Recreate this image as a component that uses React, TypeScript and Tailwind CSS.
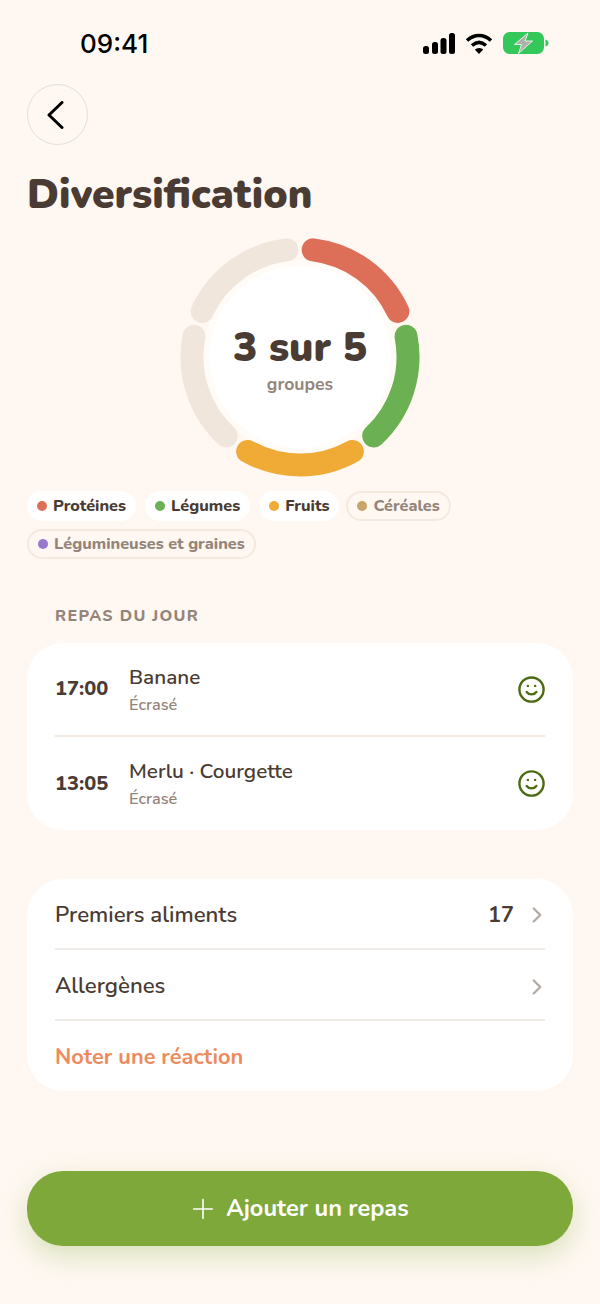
import React from 'react';
import { ChevronRight, Plus, Smile } from 'lucide-react';

const RING = [
  { color: '#DD6F59', start: 7, end: 65 },
  { color: '#6BB052', start: 79, end: 137 },
  { color: '#F0AA36', start: 151, end: 209 },
  { color: '#F1E6DC', start: 223, end: 281 },
  { color: '#F1E6DC', start: 295, end: 353 },
];

function arcPath(start: number, end: number) {
  const cx = 120;
  const cy = 120;
  const r = 108;
  const toPoint = (deg: number) => {
    const rad = (deg * Math.PI) / 180;
    return `${(cx + r * Math.sin(rad)).toFixed(2)} ${(cy - r * Math.cos(rad)).toFixed(2)}`;
  };
  return `M ${toPoint(start)} A ${r} ${r} 0 0 1 ${toPoint(end)}`;
}

function StatusBar() {
  return (
    <div className="h-[84px] flex items-start justify-between pt-[28px] pl-[80px] pr-[51px]">
      <span className="text-[26px] leading-[32px] font-medium text-black font-['Inter',sans-serif]">09:41</span>
      <div className="flex items-center gap-[10px] pt-[4px]">
        <svg width="32" height="21" viewBox="0 0 32 21" fill="#000">
          <rect x="0" y="13" width="6" height="8" rx="2.5" />
          <rect x="9" y="9" width="6" height="12" rx="2.5" />
          <rect x="17.5" y="5" width="6" height="16" rx="2.5" />
          <rect x="26" y="0" width="6" height="21" rx="2.5" />
        </svg>
        <svg width="28" height="21" viewBox="0 0 28 21" fill="none" stroke="#000" strokeWidth="3.6">
          <path d="M2 7.5C9.5 .8 18.5 .8 26 7.5" />
          <path d="M7 12.5C11.5 8.6 16.5 8.6 21 12.5" />
          <path d="M14 21l-4.2-4.4c2.6-2 5.8-2 8.4 0z" fill="#000" stroke="none" />
        </svg>
        <svg width="46" height="22" viewBox="0 0 46 22">
          <rect x="0" y="0" width="41" height="22" rx="6.5" fill="#34C759" />
          <path d="M42.5 7.5c2 .5 3 2 3 3.5s-1 3-3 3.5z" fill="#34C759" />
          <path d="M25 1L11.5 12.5h7L15.5 21.5 29.5 9H22z" fill="#AEB2AA" stroke="#fff" strokeWidth="0.8" />
        </svg>
      </div>
    </div>
  );
}

function Chip({ color, label, active, className }: { color: string; label: string; active?: boolean; className?: string }) {
  const base = active
    ? 'h-[30px] flex items-center gap-[6px] px-[10px] rounded-full bg-white text-[16.25px] font-extrabold text-[#4A3B33]'
    : 'h-[30px] flex items-center gap-[6px] px-[9px] rounded-full border-2 border-[#F4E9DF] text-[16.25px] font-extrabold text-[#94857B]';
  return (
    <div className={`${base} ${className ?? ''}`}>
      <span className="w-[10px] h-[10px] rounded-full" style={{ backgroundColor: color }} />
      <span>{label}</span>
    </div>
  );
}

function MealRow({ time, name, height }: { time: string; name: string; height: string }) {
  return (
    <div className={`${height} flex items-center`}>
      <span className="w-[74px] text-[20px] font-extrabold text-[#4A3B33]">{time}</span>
      <div className="flex-1">
        <div className="text-[20.7px] leading-[28px] font-semibold text-[#4A3B33]">{name}</div>
        <div className="text-[16.2px] leading-[22px] mt-[3px] font-semibold text-[#94857B]">Écrasé</div>
      </div>
      <Smile className="w-[29px] h-[29px] text-[#4D6B12] -mr-[1px]" strokeWidth={2} />
    </div>
  );
}

export default function App() {
  return (
    <div className="w-[600px] h-[1304px] overflow-hidden bg-[#FFF8F2] font-['Nunito','Lato',sans-serif]">
      <StatusBar />

      <div className="px-[27px]">
        <button className="w-[61px] h-[61px] rounded-full border border-[#E5DDD6] flex items-center justify-center">
          <svg width="17" height="28" viewBox="0 0 17 28" fill="none" stroke="#000" strokeWidth="3" strokeLinecap="round" strokeLinejoin="round" className="-ml-[4px]">
            <path d="M15 1.5L2 14l13 12.5" />
          </svg>
        </button>

        <h1 className="mt-[21px] text-[40.7px] leading-[58px] font-black text-[#4A3B33]">Diversification</h1>

        <div className="mt-[13px] mx-auto relative w-[240px] h-[240px]">
          <svg width="240" height="240" viewBox="0 0 240 240" fill="none">
            <circle cx="120" cy="120" r="97" fill="#FFFBF7" />
            <circle cx="120" cy="120" r="91" fill="#fff" />
            {RING.map((seg, i) => (
              <path key={i} d={arcPath(seg.start, seg.end)} stroke={seg.color} strokeWidth="23" strokeLinecap="round" />
            ))}
          </svg>
          <div className="absolute inset-0 flex flex-col items-center">
            <span className="mt-[87px] text-[40.6px] leading-[48px] font-black text-[#4A3B33]">3 sur 5</span>
            <span className="text-[17.6px] leading-[24px] font-bold text-[#94857B]">groupes</span>
          </div>
        </div>

        <div className="mt-[14px] flex flex-wrap items-center gap-x-[9px] gap-y-[8px]">
          <Chip color="#DD6F59" label="Protéines" active />
          <Chip color="#6BB052" label="Légumes" active />
          <Chip color="#F0AA36" label="Fruits" active />
          <Chip color="#C9A36A" label="Céréales" className="-ml-[2px]" />
          <Chip color="#9B78CF" label="Légumineuses et graines" />
        </div>

        <div className="mt-[45px] pl-[28px] text-[16px] leading-[24px] font-extrabold tracking-[1.3px] text-[#94857B]">REPAS DU JOUR</div>

        <div className="mt-[15px] bg-white rounded-[36px] px-[28px]">
          <MealRow time="17:00" name="Banane" height="h-[92px]" />
          <div className="h-[2px] bg-[#F4E9DF]" />
          <MealRow time="13:05" name="Merlu · Courgette" height="h-[93px]" />
        </div>

        <div className="mt-[49px] bg-white rounded-[36px] px-[28px]">
          <div className="h-[69px] pt-[4px] flex items-center justify-between">
            <span className="text-[22.2px] font-semibold text-[#4A3B33]">Premiers aliments</span>
            <div className="flex items-center gap-[10px]">
              <span className="text-[21.6px] font-bold text-[#4A3B33]">17</span>
              <ChevronRight className="w-[26px] h-[26px] text-[#B5ABA4] -mr-[5px]" strokeWidth={2.2} />
            </div>
          </div>
          <div className="h-[2px] bg-[#EFEBE7]" />
          <div className="h-[69px] pt-[4px] flex items-center justify-between">
            <span className="text-[22.2px] font-semibold text-[#4A3B33]">Allergènes</span>
            <ChevronRight className="w-[26px] h-[26px] text-[#B5ABA4] -mr-[5px]" strokeWidth={2.2} />
          </div>
          <div className="h-[2px] bg-[#EFEBE7]" />
          <div className="h-[70px] pt-[2px] flex items-center">
            <span className="text-[21.8px] font-bold text-[#EC8B5E]">Noter une réaction</span>
          </div>
        </div>

        <button className="mt-[80px] w-full h-[75px] pr-[4px] rounded-[36px] bg-[#7FA83A] shadow-[0_10px_28px_rgba(127,168,58,0.3)] flex items-center justify-center gap-[7px] text-white">
          <Plus className="w-[32px] h-[32px]" strokeWidth={1.2} />
          <span className="text-[23.6px] font-bold">Ajouter un repas</span>
        </button>
      </div>
    </div>
  );
}
